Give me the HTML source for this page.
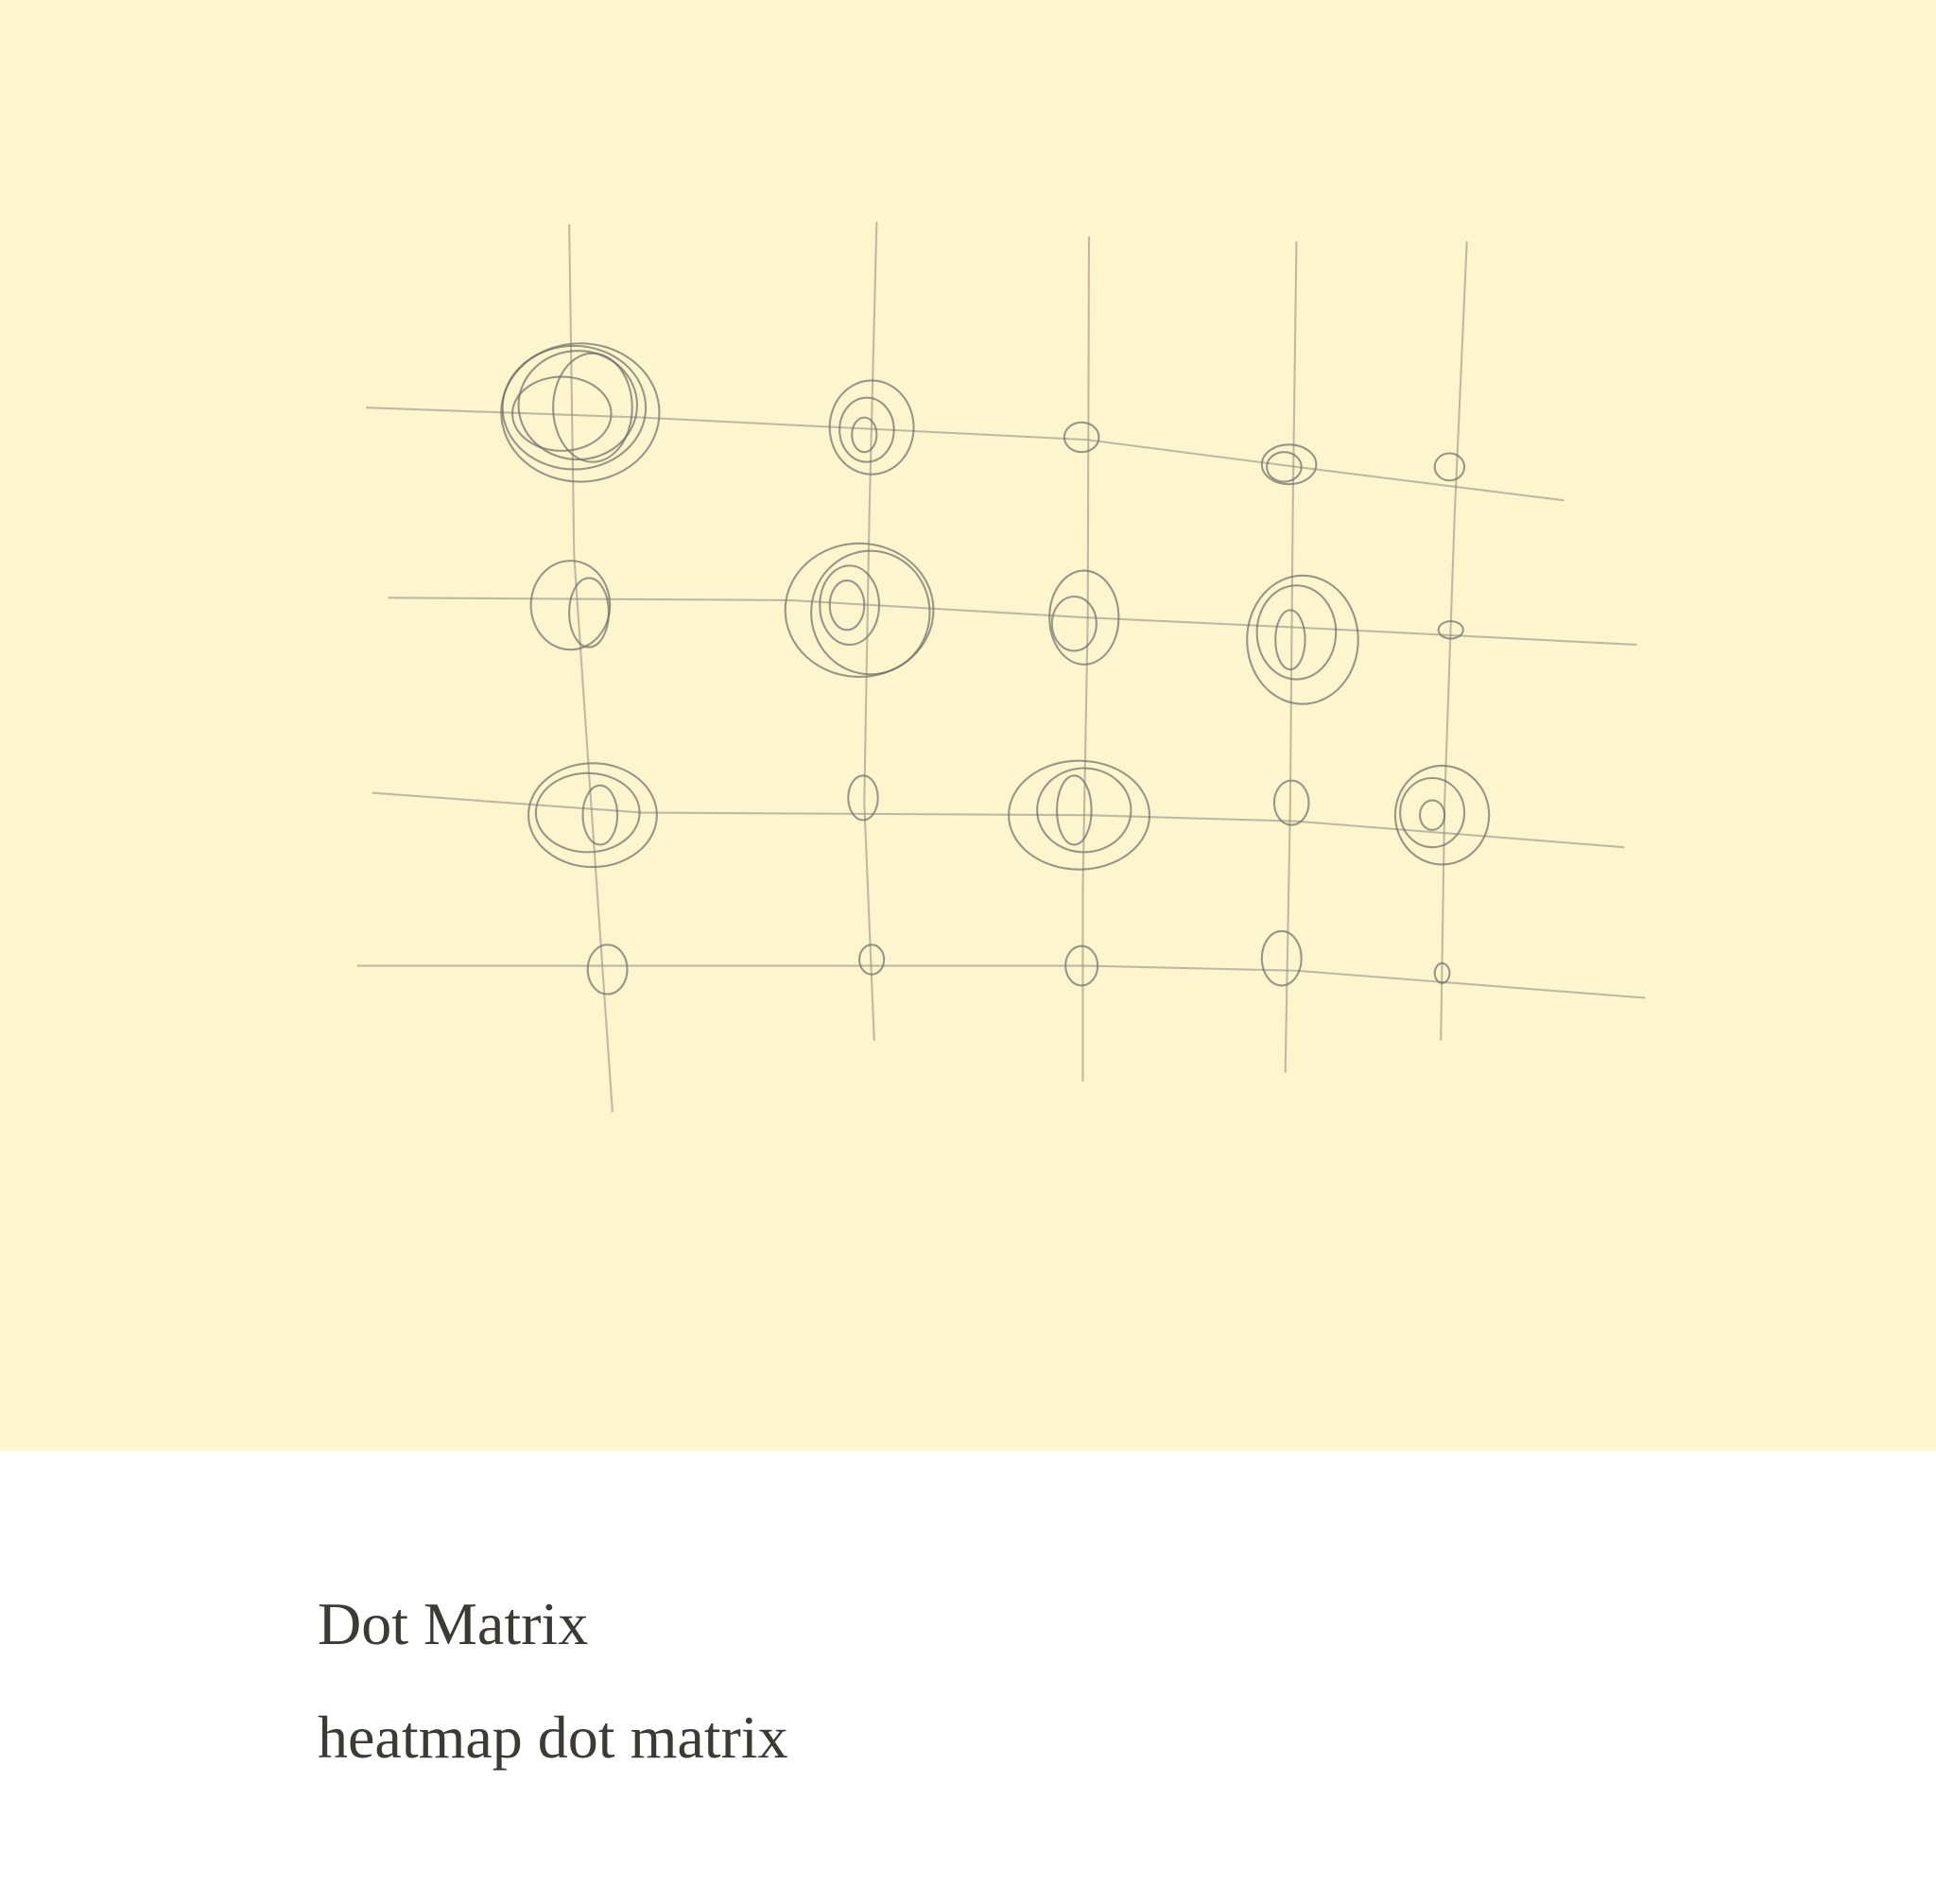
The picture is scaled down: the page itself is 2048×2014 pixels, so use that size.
<!DOCTYPE html>
<html><head><meta charset="utf-8"><style>
html,body{margin:0;padding:0;width:2048px;height:2014px;background:#fff;overflow:hidden}
.top{position:absolute;left:0;top:0;width:2048px;height:1535px;background:#fdf5cd}
svg{position:absolute;left:0;top:0}
.t{position:absolute;left:336px;font-family:"Liberation Serif",serif;color:#3d3a35;font-size:64px;line-height:1;white-space:nowrap}
</style></head><body>
<div class="top">
<svg width="2048" height="1535" viewBox="0 0 1568 1175" fill="none" stroke="#8a8880" stroke-opacity="0.55" stroke-width="1.6" stroke-linecap="round">
<path d="M461 182 L465 450 L478 640 L496 900"/>
<path d="M710 180 L704 420 L700 650 L708 842"/>
<path d="M882 192 L881 500 L877 720 L877 875"/>
<path d="M1050 196 L1047 420 L1045 650 L1041 868"/>
<path d="M1188 196 L1178 420 L1170 650 L1167 842"/>
<path d="M297 330 L520 338 L880 356 L1050 378 L1266 405"/>
<path d="M315 484 L640 486 L880 500 L1050 508 L1325 522"/>
<path d="M302 642 L520 658 L880 660 L1050 665 L1315 686"/>
<path d="M290 782 L700 782 L880 782 L1050 786 L1332 808"/>
<g stroke="#6f6d66" stroke-opacity="0.7">
<ellipse cx="470" cy="334" rx="64" ry="56"/>
<ellipse cx="465" cy="330" rx="58" ry="50"/>
<ellipse cx="468" cy="328" rx="48" ry="44"/>
<ellipse cx="480" cy="330" rx="32" ry="44"/>
<ellipse cx="455" cy="335" rx="40" ry="30"/>
<ellipse cx="706" cy="346" rx="34" ry="38"/>
<ellipse cx="702" cy="348" rx="22" ry="26"/>
<ellipse cx="700" cy="352" rx="10" ry="14"/>
<ellipse cx="876" cy="354" rx="14" ry="12"/>
<ellipse cx="1044" cy="376" rx="22" ry="16"/>
<ellipse cx="1040" cy="378" rx="14" ry="12"/>
<ellipse cx="1174" cy="378" rx="12" ry="11"/>
<ellipse cx="462" cy="490" rx="32" ry="36"/>
<ellipse cx="477" cy="496" rx="16" ry="28"/>
<ellipse cx="696" cy="494" rx="60" ry="54"/>
<ellipse cx="705" cy="496" rx="48" ry="50"/>
<ellipse cx="688" cy="490" rx="24" ry="32"/>
<ellipse cx="686" cy="490" rx="14" ry="20"/>
<ellipse cx="878" cy="500" rx="28" ry="38"/>
<ellipse cx="870" cy="505" rx="18" ry="22"/>
<ellipse cx="1055" cy="518" rx="45" ry="52"/>
<ellipse cx="1050" cy="512" rx="32" ry="38"/>
<ellipse cx="1045" cy="518" rx="12" ry="24"/>
<ellipse cx="1175" cy="510" rx="10" ry="7"/>
<ellipse cx="480" cy="660" rx="52" ry="42"/>
<ellipse cx="476" cy="658" rx="42" ry="32"/>
<ellipse cx="486" cy="660" rx="14" ry="24"/>
<ellipse cx="699" cy="646" rx="12" ry="18"/>
<ellipse cx="874" cy="660" rx="57" ry="44"/>
<ellipse cx="878" cy="656" rx="38" ry="34"/>
<ellipse cx="870" cy="656" rx="14" ry="28"/>
<ellipse cx="1046" cy="650" rx="14" ry="18"/>
<ellipse cx="1168" cy="660" rx="38" ry="40"/>
<ellipse cx="1160" cy="658" rx="26" ry="28"/>
<ellipse cx="1160" cy="660" rx="10" ry="12"/>
<ellipse cx="492" cy="785" rx="16" ry="20"/>
<ellipse cx="706" cy="777" rx="10" ry="12"/>
<ellipse cx="876" cy="782" rx="13" ry="16"/>
<ellipse cx="1038" cy="776" rx="16" ry="22"/>
<ellipse cx="1168" cy="788" rx="6" ry="8"/>
</g>
</svg>
</div>
<div class="t" style="top:1686px">Dot Matrix</div>
<div class="t" style="top:1806px">heatmap dot matrix</div>
</body></html>
